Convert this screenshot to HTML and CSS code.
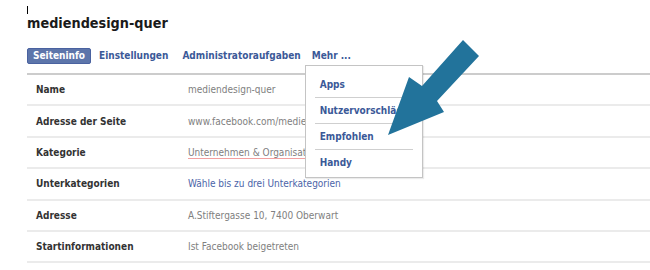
FILE: index.html
```html
<!DOCTYPE html>
<html lang="de">
<head>
    <meta charset="UTF-8">
    <title>mediendesign-quer - Seiteninfo</title>
    <link rel="stylesheet" href="styles.css">
</head>
<body>
    <div class="page">
        <div class="caret"></div>
        <h1 class="title">mediendesign-quer</h1>

        <div class="tabs">
            <a class="tab active">Seiteninfo</a>
            <a class="tab">Einstellungen</a>
            <a class="tab">Administratoraufgaben</a>
            <div class="tab more">
                Mehr ...
                <ul class="menu">
                    <li>Apps</li>
                    <li>Nutzervorschläge</li>
                    <li>Empfohlen</li>
                    <li>Handy</li>
                </ul>
            </div>
        </div>

        <div class="info">
            <div class="row">
                <div class="label">Name</div>
                <div class="value">mediendesign-quer</div>
            </div>
            <div class="row">
                <div class="label">Adresse der Seite</div>
                <div class="value">www.facebook.com/mediendesign.quer</div>
            </div>
            <div class="row">
                <div class="label">Kategorie</div>
                <div class="value"><span class="spell">Unternehmen &amp; Organisationen</span></div>
            </div>
            <div class="row">
                <div class="label">Unterkategorien</div>
                <div class="value link">Wähle bis zu drei Unterkategorien</div>
            </div>
            <div class="row">
                <div class="label">Adresse</div>
                <div class="value">A.Stiftergasse 10, 7400 Oberwart</div>
            </div>
            <div class="row">
                <div class="label">Startinformationen</div>
                <div class="value">Ist Facebook beigetreten</div>
            </div>
        </div>
    </div>

    <!-- annotation arrow pointing at "Empfohlen" -->
    <svg class="arrow" width="650" height="270" viewBox="0 0 650 270">
        <polygon points="463,40 479,56 437,101 444,112 388,135 409,77 422,86" fill="#22739b"/>
    </svg>
</body>
</html>
```

FILE: styles.css
```css
body {
    margin: 0;
    background: #fff;
    font-family: "DejaVu Sans Condensed", "DejaVu Sans", sans-serif;
    font-stretch: condensed;
    font-size: 10px;
    color: #333;
}
.page { padding-left: 27px; }
.caret { width: 1px; height: 8px; margin-top: 6px; background: #000; }
.title {
    margin: -2px 0 0;
    font-size: 14.3px;
    line-height: 22px;
    color: #1a1a1a;
}

.tabs {
    display: flex;
    align-items: center;
    margin-top: 14px;
    height: 16px;
}
.tab {
    position: relative;
    padding: 0 5px;
    margin-right: 2px;
    line-height: 14px;
    border: 1px solid transparent;
    border-radius: 2px;
    font-weight: bold;
    color: #3b5998;
    white-space: nowrap;
}
.tab.active {
    background: #5d75aa;
    border-color: #4a62a0;
    color: #fff;
}
.tab.more { margin-left: -3px; }
.menu {
    position: absolute;
    left: -2px;
    top: 16px;
    width: 116px;
    margin: 0;
    padding: 6px 0 2px;
    list-style: none;
    background: #fff;
    border: 1px solid #c4c4c4;
    box-shadow: 1px 1px 1px rgba(0, 0, 0, 0.08);
    z-index: 2;
}
.menu li {
    margin: 0 9px;
    padding-left: 5px;
    line-height: 25px;
    color: #3b5998;
}
.menu li + li { border-top: 1px solid #cfcfcf; }

.info {
    margin-top: 9px;
    border-top: 2px solid #cccccc;
}
.row {
    display: flex;
    align-items: center;
    height: 29.4px;
    border-bottom: 2px solid #ebebeb;
    padding-left: 9px;
}
.label { width: 152px; font-weight: bold; color: #333; }
.value { color: #808080; white-space: nowrap; }
.value.link { color: #4b64a8; }
.spell { text-decoration: underline solid #f2a0a0; text-decoration-thickness: 1px; text-underline-offset: 2px; }

.arrow { position: absolute; left: 0; top: 0; z-index: 3; pointer-events: none; }
```
